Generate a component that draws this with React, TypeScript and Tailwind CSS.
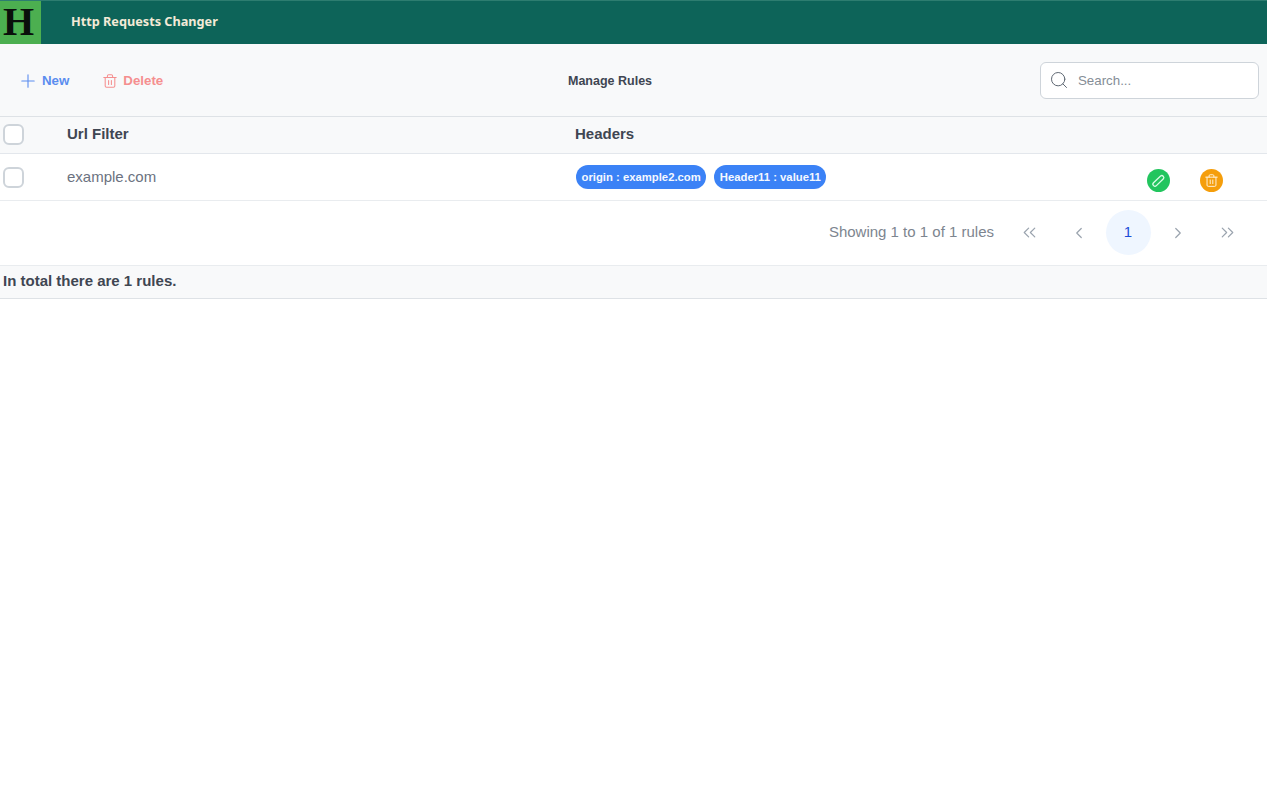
import { ChevronLeft, ChevronRight, ChevronsLeft, ChevronsRight, Search } from "lucide-react";

const SANS = "font-['Liberation_Sans','Arial',sans-serif]";

function Checkbox() {
  return <div className="h-[21px] w-[21px] rounded-md border-2 border-[#ced4da] bg-white" />;
}

function Tag({ label }: { label: string }) {
  return (
    <span className="flex h-6 items-center rounded-full bg-[#3b82f6] px-[5.5px] text-[11.3px] font-bold text-[#f4f8ff]">
      {label}
    </span>
  );
}

function PageButton({ children }: { children: React.ReactNode }) {
  return <button className="flex h-[45px] w-[45px] items-center justify-center text-[#9aa3ae]">{children}</button>;
}

function PlusIcon() {
  return (
    <svg width="14" height="14" viewBox="0 0 14 14" fill="none" stroke="currentColor" strokeWidth="1.1" strokeLinecap="round">
      <path d="M7 .8v12.4M.8 7h12.4" />
    </svg>
  );
}

function TrashIcon({ size }: { size: number }) {
  return (
    <svg width={size} height={size} viewBox="0 0 14 14" fill="none" stroke="currentColor" strokeWidth="1.05" strokeLinecap="round" strokeLinejoin="round">
      <path d="M.8 3.4h12.4" />
      <path d="M4.4 3.4V2a1.2 1.2 0 0 1 1.2-1.2h2.8A1.2 1.2 0 0 1 9.6 2v1.4" />
      <path d="M2.2 3.4V12a1.3 1.3 0 0 0 1.3 1.3h7a1.3 1.3 0 0 0 1.3-1.3V3.4" />
      <path d="M5.6 6.4v4M8.4 6.4v4" />
    </svg>
  );
}

function PencilIcon() {
  return (
    <svg width="15" height="15" viewBox="0 0 15 15" fill="none" stroke="currentColor" strokeWidth="1.3" strokeLinecap="round" strokeLinejoin="round">
      <path d="M9.6 3a2 2 0 0 1 2.8 2.8L5.4 12.6a2 2 0 0 1-2.9-2.8z" />
    </svg>
  );
}

export default function App() {
  return (
    <div className={`min-h-[800px] w-[1267px] bg-white ${SANS}`}>
      <header className="flex h-11 items-stretch border-t border-[#2d7d70] bg-[#0d6459]">
        <div className="flex w-[41px] items-center justify-center bg-[#4caf50] pr-1 pb-[2px] font-['Liberation_Serif',serif] text-[40px] leading-none font-bold text-[#0a0f0b]">
          H
        </div>
        <div className="ml-[30px] flex items-center pb-[2px] font-['Noto_Sans',sans-serif] text-[12.7px] font-bold text-[#f3ead7]">
          Http Requests Changer
        </div>
      </header>

      <div className="flex h-[73px] items-center border-b border-[#dee2e6] bg-[#f8f9fa]">
        <div className="flex w-[568px] items-center pt-[2px] pl-[21px] text-[13.3px] font-bold">
          <button className="flex items-center gap-[7px] text-[#5b8def]">
            <PlusIcon />
            New
          </button>
          <button className="ml-[34px] flex items-center gap-[6px] text-[#f58f8f]">
            <TrashIcon size={14} />
            Delete
          </button>
        </div>
        <div className="pt-[2px] text-[12.5px] font-bold text-[#3f4652]">Manage Rules</div>
        <div className="mr-2 ml-auto flex h-[37px] w-[219px] items-center gap-[9.5px] rounded-md border border-[#ced4da] bg-white pl-[7.5px] text-[13.3px] text-[#858d96]">
          <Search size={20} strokeWidth={1.2} className="text-[#5f6873]" />
          <span className="pt-[2px]">Search...</span>
        </div>
      </div>

      <div className="flex h-[37px] items-center border-b border-[#e3e7ec] bg-[#f8f9fa] pb-px text-[15px] font-bold text-[#3f4652]">
        <div className="w-[67px] pl-[3px]">
          <Checkbox />
        </div>
        <div className="w-[508px]">Url Filter</div>
        <div>Headers</div>
      </div>

      <div className="flex h-[47px] items-center border-b border-[#e9ecef] text-[15px] text-[#6b7280]">
        <div className="w-[67px] pl-[3px]">
          <Checkbox />
        </div>
        <div className="w-[509px]">example.com</div>
        <div className="flex gap-2">
          <Tag label="origin : example2.com" />
          <Tag label="Header11 : value11" />
        </div>
        <div className="mt-[7px] ml-auto flex gap-[30px] pr-[44px]">
          <span className="flex h-[23px] w-[23px] items-center justify-center rounded-full bg-[#22c55e] text-[#dcfce7]">
            <PencilIcon />
          </span>
          <span className="flex h-[23px] w-[23px] items-center justify-center rounded-full bg-[#f59e0b] text-[#fff3dc]">
            <TrashIcon size={13} />
          </span>
        </div>
      </div>

      <div className="flex h-[65px] items-center justify-end border-b border-[#e9ecef] pr-[17.5px] pb-px">
        <span className="mr-[12.5px] text-[15px] text-[#7d858f]">Showing 1 to 1 of 1 rules</span>
        <div className="flex items-center gap-[4.5px]">
          <PageButton>
            <ChevronsLeft size={21} strokeWidth={1.4} />
          </PageButton>
          <PageButton>
            <ChevronLeft size={18} strokeWidth={1.6} />
          </PageButton>
          <button className="flex h-[45px] w-[45px] items-center justify-center rounded-full bg-[#eff6ff] text-[15px] text-[#1d4ed8]">
            1
          </button>
          <PageButton>
            <ChevronRight size={18} strokeWidth={1.6} />
          </PageButton>
          <PageButton>
            <ChevronsRight size={21} strokeWidth={1.4} />
          </PageButton>
        </div>
      </div>

      <div className="flex h-[33px] items-center border-b border-[#dee2e6] bg-[#f8f9fa] pb-px pl-[3px] text-[15px] font-bold text-[#3f4652]">
        In total there are 1 rules.
      </div>
    </div>
  );
}
